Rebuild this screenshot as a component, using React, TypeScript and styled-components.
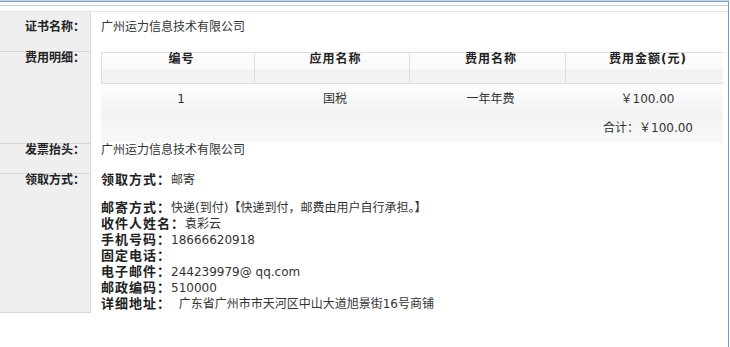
import { Fragment } from 'react'
import styled, { createGlobalStyle } from 'styled-components'

const GlobalStyle = createGlobalStyle`
  html, body {
    margin: 0;
    padding: 0;
    background: #fff;
  }
  body {
    font-family: "DejaVu Sans", "Noto Sans CJK SC", sans-serif;
    font-size: 12px;
    color: #333;
  }
`

type FeeType = {
  no: string
  app: string
  name: string
  amount: string
}

const fees: FeeType[] = [{ no: '1', app: '国税', name: '一年年费', amount: '￥100.00' }]

const postLines: [string, string][] = [
  ['邮寄方式：', '快递(到付)【快递到付，邮费由用户自行承担。】'],
  ['收件人姓名：', '袁彩云'],
  ['手机号码：', '18666620918'],
  ['固定电话：', ''],
  ['电子邮件：', '244239979@ qq.com'],
  ['邮政编码：', '510000'],
  ['详细地址：', '\u00a0\u00a0广东省广州市市天河区中山大道旭景街16号商铺'],
]

export default function App() {
  return (
    <>
      <GlobalStyle />
      <Page>
        <Frame>
          <Rules />
          <Row $h={40}>
            <Label $pad={9}>证书名称：</Label>
            <Value $pad={9}>广州运力信息技术有限公司</Value>
          </Row>
          <Row $h={92}>
            <Label $pad={0}>费用明细：</Label>
            <Value $pad={0}>
              <FeeTable>
                <HeadCell>编号</HeadCell>
                <HeadCell>应用名称</HeadCell>
                <HeadCell>费用名称</HeadCell>
                <HeadCell>费用金额(元)</HeadCell>
                {fees.map(f => (
                  <Fragment key={f.no}>
                    <BodyCell>{f.no}</BodyCell>
                    <BodyCell>{f.app}</BodyCell>
                    <BodyCell>{f.name}</BodyCell>
                    <BodyCell>{f.amount}</BodyCell>
                  </Fragment>
                ))}
                <TotalCell>合计：￥100.00</TotalCell>
              </FeeTable>
            </Value>
          </Row>
          <Row $h={30}>
            <Label $pad={0}>发票抬头：</Label>
            <Value $pad={0}>广州运力信息技术有限公司</Value>
          </Row>
          <Row $h={139}>
            <Label $pad={0}>领取方式：</Label>
            <Value $pad={0}>
              <div>
                <Key>领取方式：</Key>邮寄
              </div>
              <PostBlock>
                {postLines.map(([k, v]) => (
                  <div key={k}>
                    <Key>{k}</Key>
                    {v}
                  </div>
                ))}
              </PostBlock>
            </Value>
          </Row>
        </Frame>
      </Page>
    </>
  )
}

const Page = styled.div`
  border-top: 1px solid #cfcfcf;
`

const Frame = styled.div`
  width: 728px;
  height: 345px;
  border-top: 1px solid #7aa6dc;
  border-right: 1px solid #6b9bd8;
`

const Rules = styled.div`
  margin-top: 3px;
  height: 5px;
  border-top: 1px solid #c8c8c8;
  border-bottom: 1px solid #e2e2e2;
`

const Row = styled.div<{ $h: number }>`
  display: grid;
  grid-template-columns: 91px 1fr;
  height: ${p => p.$h}px;
`

const Label = styled.div<{ $pad: number }>`
  box-sizing: border-box;
  padding: ${p => p.$pad}px 5px 0 0;
  background: #efefef;
  border-right: 1px solid #d9d9d9;
  border-bottom: 1px solid #d6d6d6;
  text-align: right;
  font-weight: bold;
  color: #222;
  line-height: 12px;
`

const Value = styled.div<{ $pad: number }>`
  padding: ${p => p.$pad}px 5px 0 10px;
  line-height: 12px;
`

const Key = styled.b`
  font-size: 13px;
  letter-spacing: 1px;
  color: #222;
`

const PostBlock = styled.div`
  margin-top: 14px;
  line-height: 16px;
`

const FeeTable = styled.div`
  display: grid;
  grid-template-columns: 153px 155px 156px 1fr;
`

const HeadCell = styled.div`
  box-sizing: border-box;
  height: 32px;
  padding-left: 7px;
  border-top: 1px solid #dedede;
  border-bottom: 1px solid #dedede;
  border-left: 1px solid #dedede;
  background: linear-gradient(#fdfdfd 0%, #f9f9f9 54%, #f2f2f2 57%, #f2f2f2 100%);
  text-align: center;
  font-weight: bold;
  letter-spacing: 1px;
  color: #222;
  line-height: 12px;
`

const BodyCell = styled.div`
  height: 29px;
  padding-left: 7px;
  display: flex;
  align-items: center;
  justify-content: center;
  background: linear-gradient(#fefefe, #f3f3f3);
`

const TotalCell = styled.div`
  grid-column: 1 / -1;
  height: 30px;
  padding-right: 30px;
  line-height: 30px;
  text-align: right;
  background: linear-gradient(#f3f3f3, #f8f8f8);
`
